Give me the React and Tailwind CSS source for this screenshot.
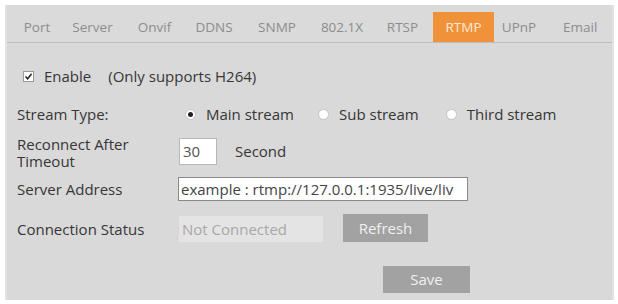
import React from "react";

const tabs = [
  { t: "Port", w: "w-[50px]" },
  { t: "Server", w: "w-[61px]" },
  { t: "Onvif", w: "w-[63px]" },
  { t: "DDNS", w: "w-[56px]" },
  { t: "SNMP", w: "w-[70px]" },
  { t: "802.1X", w: "w-[60px]" },
  { t: "RTSP", w: "w-[61px]" },
  { t: "RTMP", w: "w-[61px]" },
  { t: "UPnP", w: "w-[50px]" },
];

function Radio({ checked }) {
  return (
    <span className="inline-flex h-[11px] w-[11px] items-center justify-center rounded-full border border-[#c4c4c4] bg-white">
      {checked && <span className="h-[5px] w-[5px] rounded-full bg-[#222]" />}
    </span>
  );
}

export default function App() {
  return (
    <div className="h-[304px] w-[618px] bg-white pl-[5px] pt-[5px] font-['Open_Sans','Noto_Sans',sans-serif] text-[15px] text-[#363636]">
      <div className="flex h-[295px] w-[609px] flex-col border-x-2 border-[#e2e2e2] bg-[#d9d9d9]">
        <div className="flex h-[38px] items-end border-b border-[#bdbdbd] bg-[#dadada] pl-[5px] text-[13.5px]">
          {tabs.map(({ t, w }) => (
            <div
              key={t}
              className={`flex h-[30px] shrink-0 items-center justify-center ${w} ${t === "RTMP" ? "bg-[#f0923a] text-[#fde9d6]" : "text-[#8d8d8d]"}`}
            >
              {t}
            </div>
          ))}
          <div className="flex h-[30px] items-center pl-[19px] text-[#8d8d8d]">Email</div>
        </div>
        <div className="flex flex-col pl-[10px] pt-[19px]">
          <div className="flex h-[28px] items-center pl-[6px]">
            <span className="flex h-[11px] w-[11px] items-center justify-center border border-[#9a9a9a] bg-white">
              <svg width="9" height="9" viewBox="0 0 9 9"><path d="M1.5 4.5 L3.6 6.8 L7.6 1.8" fill="none" stroke="#222" strokeWidth="1.5" /></svg>
            </span>
            <span className="ml-[10px]">Enable</span>
            <span className="ml-[17px]">(Only supports H264)</span>
          </div>
          <div className="mt-[13px] flex h-[22px] items-center">
            <span className="w-[168px]">Stream Type:</span>
            <span className="flex items-center gap-[10px]"><Radio checked />Main stream</span>
            <span className="ml-[24px] flex items-center gap-[10px]"><Radio />Sub stream</span>
            <span className="ml-[27px] flex items-center gap-[10px]"><Radio />Third stream</span>
          </div>
          <div className="mt-[13px] flex h-[27px] items-center">
            <div className="flex w-[162px] flex-col pt-[2px]">
              <span className="h-[17px] leading-[17px]">Reconnect After</span>
              <span className="h-[17px] leading-[17px]">Timeout</span>
            </div>
            <div className="flex h-[27px] w-[38px] items-center border border-[#b8b8b8] bg-white pl-[3px] text-[#555]">30</div>
            <span className="ml-[18px]">Second</span>
          </div>
          <div className="mt-[12px] flex h-[24px] items-center">
            <span className="w-[161px]">Server Address</span>
            <div className="flex h-[24px] w-[290px] items-center overflow-hidden whitespace-nowrap border border-[#8a8a8a] bg-white pl-[2px] text-[#444]">
              example : rtmp://127.0.0.1:1935/live/liv
            </div>
          </div>
          <div className="mt-[13px] flex h-[29px] items-start">
            <span className="w-[162px] pt-[4px]">Connection Status</span>
            <div className="mt-[2px] flex h-[26px] w-[144px] items-center bg-[#e4e4e4] pl-[3px] text-[#a8a8a8]">Not Connected</div>
            <div className="ml-[20px] flex h-[28px] w-[85px] items-center justify-center bg-[#a2a2a2] text-[#f0f0f0]">Refresh</div>
          </div>
          <div className="mt-[23px] flex pl-[366px]">
            <div className="flex h-[27px] w-[87px] items-center justify-center bg-[#a2a2a2] text-[#f0f0f0]">Save</div>
          </div>
        </div>
      </div>
    </div>
  );
}
